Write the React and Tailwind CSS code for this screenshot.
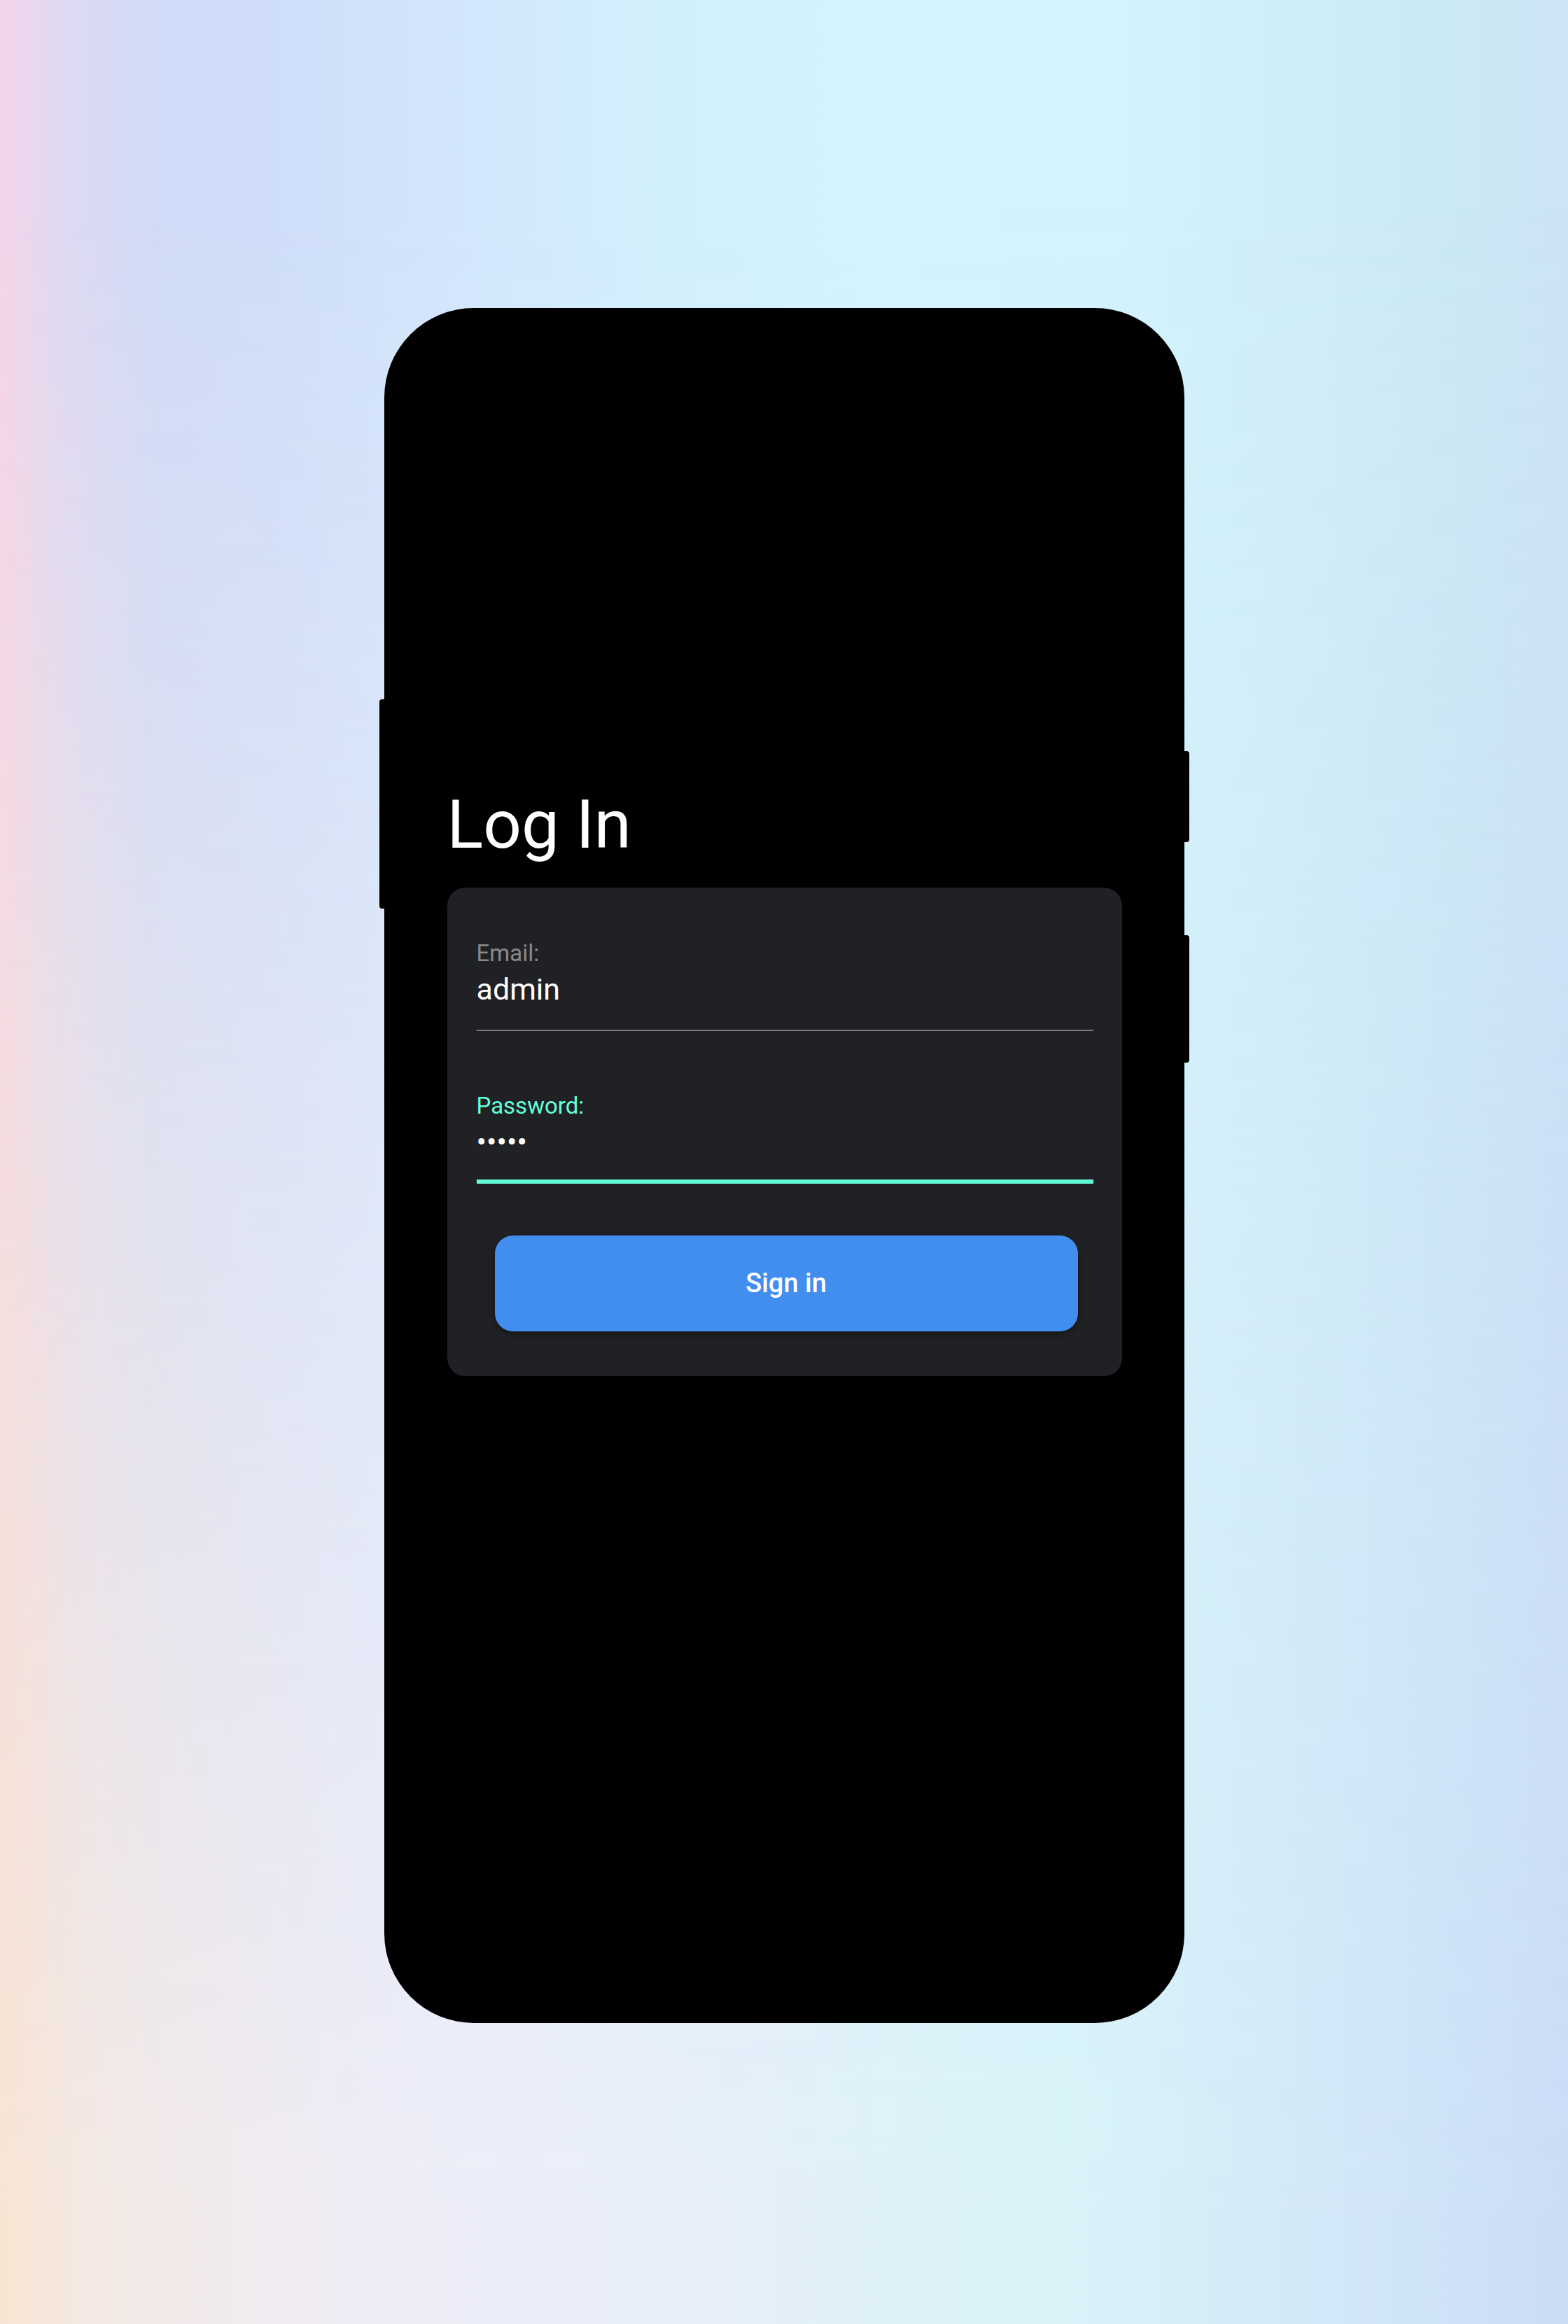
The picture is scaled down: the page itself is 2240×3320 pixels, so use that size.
import { useState } from 'react'

const FONT = "font-['Roboto',_'Noto_Sans',_sans-serif]"

function SideKey({ side, className }) {
  const shape = side === 'left' ? 'right-full rounded-l-[4px]' : 'left-full rounded-r-[4px]'
  return <span className={`absolute w-[7px] bg-black ${shape} ${className}`} />
}

function Field({ label, type, value, onChange, focused }) {
  return (
    <label className="block">
      <span className={`block text-[33px] leading-[39px] ${focused ? 'text-[#64ffda]' : 'text-[#88898d]'}`}>{label}</span>
      <input
        type={type}
        value={value}
        onChange={(e) => onChange(e.target.value)}
        className={`mt-[7px] block w-full bg-transparent text-[43px] leading-[50px] text-white outline-none ${
          focused ? 'border-b-[6px] border-[#64ffda] pb-[29px]' : 'border-b-2 border-[#7c7d80] pb-[33px]'
        }`}
      />
    </label>
  )
}

export default function App() {
  const [email, setEmail] = useState('admin')
  const [password, setPassword] = useState('admin')

  return (
    <div
      className={`${FONT} grid min-h-[3320px] w-full bg-[linear-gradient(to_right,#f4d5ea_0%,#dfd9f3_4%,#d0dbf7_10%,#cfdef9_18%,#d3e7fc_30%,#d2f0fc_42%,#d3f5fe_55%,#d3f3fd_72%,#cfedf8_85%,#cbe9f4_93%,#cde4f5_100%)]`}
    >
      <div className="col-start-1 row-start-1 bg-[linear-gradient(to_right,#f8e5d3_0%,#f4e9e4_6%,#f1ebee_15%,#eeedf7_25%,#ebeefa_35%,#e5eff9_48%,#dcf2f8_60%,#d9f3f9_68%,#d5ebf8_80%,#d0e4f8_90%,#cbdcf6_100%)] [mask-image:linear-gradient(to_bottom,transparent_0%,transparent_8%,black_96%)]" />

      <div className="col-start-1 row-start-1 flex justify-center pt-[440px] pb-[430px]">
        <div className="relative h-[2450px] w-[1143px] rounded-[128px] bg-black pt-[682px] pr-[89px] pl-[90px]">
          <SideKey side="left" className="top-[559px] h-[299px]" />
          <SideKey side="right" className="top-[633px] h-[130px]" />
          <SideKey side="right" className="top-[896px] h-[182px]" />

          <h1 className="mb-[34px] text-[96px] leading-[112px] font-normal text-white">Log In</h1>

          <form
            className="rounded-[26px] bg-[#202124] pt-[74px] pr-[41px] pb-[64px] pl-[42px]"
            onSubmit={(e) => e.preventDefault()}
          >
            <Field label="Email:" type="text" value={email} onChange={setEmail} />
            <div className="mt-[87px]">
              <Field label="Password:" type="password" value={password} onChange={setPassword} focused />
            </div>
            <div className="mt-[74px] pr-[22px] pl-[26px]">
              <button
                type="submit"
                className="flex h-[137px] w-full items-center justify-center rounded-[26px] bg-[#418eee] text-[38px] font-medium text-white shadow-[0_4px_8px_rgba(0,0,0,0.35)]"
              >
                Sign in
              </button>
            </div>
          </form>
        </div>
      </div>
    </div>
  )
}
